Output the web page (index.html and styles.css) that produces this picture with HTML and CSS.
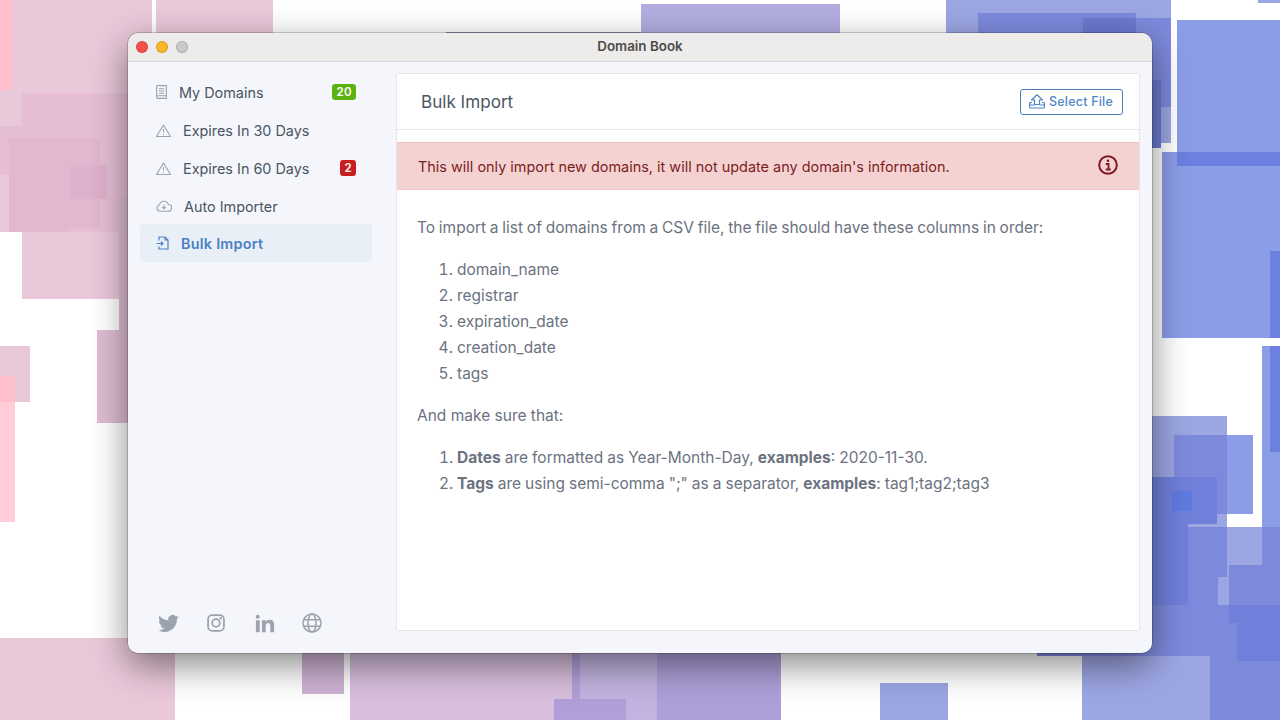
FILE: index.html
```html
<!DOCTYPE html>
<html lang="en">
<head>
    <meta charset="UTF-8">
    <meta name="viewport" content="width=device-width, initial-scale=1.0">
    <title>Domain Book</title>
    <link rel="stylesheet" href="styles.css">
</head>
<body>
    <!-- Desktop wallpaper -->
    <svg class="wallpaper" width="1280" height="720" viewBox="0 0 1280 720">
        <rect class="pink" x="0" y="0" width="152" height="232"/>
        <rect class="pink" x="156" y="0" width="117" height="60"/>
        <rect class="pink" x="22" y="232" width="130" height="67"/>
        <rect class="pink-1" x="22" y="93" width="130" height="139"/>
        <rect class="pink-1" x="0" y="126" width="66" height="49"/>
        <rect class="pink-2" x="9" y="138" width="57" height="94"/>
        <rect class="pink-2" x="66" y="138" width="34" height="90"/>
        <rect class="pink-3" x="70" y="165" width="37" height="34"/>
        <rect class="rose" x="0" y="0" width="12" height="90"/>
        <rect class="pink-4" x="119" y="197" width="40" height="133"/>
        <rect class="pink-4" x="97" y="330" width="60" height="93"/>
        <rect class="pink" x="0" y="346" width="30" height="56"/>
        <rect class="rose-light" x="0" y="402" width="15" height="120"/>
        <rect class="rose" x="0" y="376" width="15" height="26"/>
        <rect class="pink" x="0" y="638" width="175" height="82"/>

        <rect class="mauve" x="302" y="640" width="42" height="54"/>
        <rect class="mauve-light" x="350" y="640" width="222" height="80"/>
        <rect class="lilac-2" x="572" y="640" width="8" height="80"/>
        <rect class="lilac-1" x="580" y="640" width="77" height="80"/>
        <rect class="lilac-2" x="554" y="699" width="72" height="21"/>
        <rect class="lilac-3" x="657" y="640" width="121" height="80"/>
        <rect class="lilac-2" x="778" y="640" width="3" height="80"/>

        <rect class="smoke" x="446" y="32" width="195" height="6"/>
        <rect class="lilac-top" x="641" y="4" width="199" height="40"/>

        <rect class="blue" x="880" y="683" width="68" height="37"/>
        <rect class="blue" x="946" y="0" width="225" height="143"/>
        <rect class="blue-1" x="978" y="13" width="158" height="40"/>
        <rect class="blue-1" x="1083" y="18" width="88" height="89"/>
        <rect class="blue-3" x="1083" y="18" width="53" height="35"/>
        <rect class="blue-3" x="1083" y="80" width="78" height="68"/>
        <rect class="blue" x="1258" y="0" width="22" height="3"/>

        <rect class="azure" x="1177" y="20" width="103" height="146"/>
        <rect class="azure" x="1162" y="152" width="118" height="186"/>
        <rect class="azure-1" x="1177" y="152" width="103" height="14"/>
        <rect class="azure-1" x="1270" y="251" width="10" height="87"/>
        <rect class="azure" x="1262" y="346" width="18" height="181"/>
        <rect class="azure-1" x="1270" y="346" width="10" height="106"/>

        <rect class="blue" x="1130" y="416" width="97" height="161"/>
        <rect class="azure" x="1227" y="435" width="26" height="79"/>
        <rect class="blue-1" x="1174" y="435" width="53" height="79"/>
        <rect class="blue-2" x="1130" y="477" width="87" height="47"/>
        <rect class="azure-2" x="1172" y="491" width="20" height="20"/>
        <rect class="blue" x="1218" y="514" width="9" height="13"/>
        <rect class="blue" x="1227" y="527" width="35" height="78"/>
        <rect class="blue-1" x="1188" y="527" width="39" height="78"/>
        <rect class="blue" x="1218" y="577" width="11" height="28"/>
        <rect class="blue-1" x="1262" y="527" width="18" height="63"/>
        <rect class="blue-2" x="1130" y="524" width="58" height="84"/>
        <rect class="blue-1" x="1229" y="565" width="51" height="40"/>
        <rect class="blue-1" x="1037" y="605" width="173" height="51"/>
        <rect class="blue" x="1082" y="656" width="128" height="64"/>
        <rect class="blue-1" x="1210" y="605" width="70" height="115"/>
        <rect class="blue-2" x="1229" y="605" width="51" height="18"/>
        <rect class="blue-2" x="1237" y="623" width="43" height="38"/>
    </svg>

    <div class="window">
        <div class="titlebar">
            <div class="lights">
                <span class="light light-close"></span>
                <span class="light light-min"></span>
                <span class="light light-max"></span>
            </div>
            <div class="window-title">Domain Book</div>
        </div>

        <div class="window-body">
            <aside class="sidebar">
                <nav class="nav">
                    <a class="nav-item" href="#">
                        <svg class="nav-icon icon-book" viewBox="0 0 11 14" fill="none" stroke="currentColor" stroke-width="1.100">
                            <path d="M.6 12V1.600a1 1 0 0 1 1-1h8.800v12.800H1.800A1.200 1.200 0 0 1 .6 12a1.200 1.200 0 0 1 1.200-1.200h8.600"/>
                            <path d="M2.800 3.700h5.400M2.800 6h5.400M2.800 8.300h5.400"/>
                        </svg>
                        <span>My Domains</span>
                        <span class="badge badge-green">20</span>
                    </a>
                    <a class="nav-item" href="#">
                        <svg class="nav-icon icon-warn" viewBox="0 0 15 13" fill="none" stroke="currentColor" stroke-width="1.100">
                            <path d="M7.500 1 14.500 12.500H.5z" stroke-linejoin="round"/>
                            <path d="M7.500 5v3.500M7.500 10v1"/>
                        </svg>
                        <span>Expires In 30 Days</span>
                    </a>
                    <a class="nav-item" href="#">
                        <svg class="nav-icon icon-warn" viewBox="0 0 15 13" fill="none" stroke="currentColor" stroke-width="1.100">
                            <path d="M7.500 1 14.500 12.500H.5z" stroke-linejoin="round"/>
                            <path d="M7.500 5v3.500M7.500 10v1"/>
                        </svg>
                        <span>Expires In 60 Days</span>
                        <span class="badge badge-red">2</span>
                    </a>
                    <a class="nav-item" href="#">
                        <svg class="nav-icon icon-cloud" viewBox="0 0 16 12" fill="none" stroke="currentColor" stroke-width="1.100">
                            <path d="M4 11.300a3.200 3.200 0 0 1-.6-6.300a4.600 4.600 0 0 1 8.900-.5a3.400 3.400 0 0 1-.3 6.800z" stroke-linejoin="round"/>
                            <path d="M8 4.500v4M6.200 7 8 8.800 9.800 7"/>
                        </svg>
                        <span>Auto Importer</span>
                    </a>
                    <a class="nav-item active" href="#">
                        <svg class="nav-icon icon-import" viewBox="0 0 13 14" fill="none" stroke="currentColor" stroke-width="1.200">
                            <path d="M3 4.500V1h6l3 3v9H3v-2.500"/>
                            <path d="M9 1v3h3M.5 7.500h6.500M5 5.500l2 2-2 2"/>
                        </svg>
                        <span>Bulk Import</span>
                    </a>
                </nav>

                <div class="social">
                    <a href="#" class="social-link">
                        <svg width="21" height="21" viewBox="0 0 24 24" fill="currentColor">
                            <path d="M23.953 4.570a10 10 0 0 1-2.825.775 4.958 4.958 0 0 0 2.163-2.723c-.951.555-2.005.959-3.127 1.184a4.920 4.920 0 0 0-8.384 4.482C7.690 8.095 4.067 6.130 1.640 3.162a4.822 4.822 0 0 0-.666 2.475c0 1.710.870 3.213 2.188 4.096a4.904 4.904 0 0 1-2.228-.616v.060a4.923 4.923 0 0 0 3.946 4.827 4.996 4.996 0 0 1-2.212.085 4.936 4.936 0 0 0 4.604 3.417 9.867 9.867 0 0 1-6.102 2.105c-.390 0-.779-.023-1.170-.067a13.995 13.995 0 0 0 7.557 2.209c9.053 0 13.998-7.496 13.998-13.985 0-.210 0-.420-.015-.630A9.935 9.935 0 0 0 24 4.590z"/>
                        </svg>
                    </a>
                    <a href="#" class="social-link">
                        <svg width="18" height="18" viewBox="0 0 20 20" fill="none" stroke="currentColor" stroke-width="1.900">
                            <rect x="1.200" y="1.200" width="17.600" height="17.600" rx="4.500"/>
                            <circle cx="10" cy="10" r="4.200"/>
                            <circle cx="15.200" cy="4.800" r=".5" fill="currentColor"/>
                        </svg>
                    </a>
                    <a href="#" class="social-link">
                        <svg width="23" height="23" viewBox="0 0 24 24" fill="currentColor">
                            <path d="M6.940 5a2 2 0 1 1-4-.002 2 2 0 0 1 4 .002zM7 8.480H3V21h4V8.480zm6.320 0H9.340V21h3.940v-6.570c0-3.660 4.770-4 4.770 0V21H22v-7.930c0-6.170-7.060-5.940-8.720-2.910l.040-1.680z"/>
                        </svg>
                    </a>
                    <a href="#" class="social-link">
                        <svg width="20" height="20" viewBox="0 0 20 20" fill="none" stroke="currentColor" stroke-width="1.500">
                            <circle cx="10" cy="10" r="9"/>
                            <ellipse cx="10" cy="10" rx="4" ry="9"/>
                            <path d="M1.800 6.700h16.400M1.800 13.300h16.400"/>
                        </svg>
                    </a>
                </div>
            </aside>

            <main class="panel">
                <header class="panel-header">
                    <h1 class="panel-title">Bulk Import</h1>
                    <button class="select-btn">
                        <svg class="select-icon" viewBox="0 0 16 15" fill="none" stroke="currentColor" stroke-width="1.200" stroke-linejoin="round">
                            <path d="M8 .8 13.500 6H10.500V10.500H5.500V6H2.500z"/>
                            <path d="M3 8.500H1.600a1 1 0 0 0-1 1V13a1 1 0 0 0 1 1h12.800a1 1 0 0 0 1-1V9.500a1 1 0 0 0-1-1H13M.6 11h4.900M10.500 11h4.900"/>
                        </svg>
                        Select File
                    </button>
                </header>

                <div class="alert">
                    <span>This will only import new domains, it will not update any domain's information.</span>
                    <svg class="alert-icon" viewBox="0 0 20 20" fill="none" stroke="currentColor">
                        <circle cx="10" cy="10" r="8.800" stroke-width="2"/>
                        <circle cx="10" cy="5.800" r="1.300" fill="currentColor" stroke="none"/>
                        <path d="M7.800 9h2.700v5M7.800 14.500h5" stroke-width="1.800"/>
                    </svg>
                </div>

                <div class="content">
                    <p class="intro">To import a list of domains from a CSV file, the file should have these columns in order:</p>
                    <ol>
                        <li>domain_name</li>
                        <li>registrar</li>
                        <li>expiration_date</li>
                        <li>creation_date</li>
                        <li>tags</li>
                    </ol>
                    <p>And make sure that:</p>
                    <ol class="rules">
                        <li><strong>Dates</strong> are formatted as Year-Month-Day, <strong>examples</strong>: 2020-11-30.</li>
                        <li><strong>Tags</strong> are using semi-comma ";" as a separator, <strong>examples</strong>: tag1;tag2;tag3</li>
                    </ol>
                </div>
            </main>
        </div>
    </div>
</body>
</html>
```

FILE: styles.css
```css
* {
    box-sizing: border-box;
}

html,
body {
    margin: 0;
    padding: 0;
    height: 100%;
    overflow: hidden;
}

body {
    background-color: #fff;
    font-family: Inter, "Noto Sans", sans-serif;
}

a {
    text-decoration: none;
    color: inherit;
}

/* wallpaper */
.wallpaper {
    position: absolute;
    left: 0;
    top: 0;
}

.pink { fill: #e9c8da; }
.pink-1 { fill: #e5bed5; }
.pink-2 { fill: #e2b7d0; }
.pink-3 { fill: #deb1cc; }
.pink-4 { fill: #dfbdd3; }
.rose { fill: #ffbfca; }
.rose-light { fill: #ffccd7; }
.mauve { fill: #ceb3d3; }
.mauve-light { fill: #d8bfdd; }
.lilac-1 { fill: #c2b3e0; }
.lilac-2 { fill: #b29fd8; }
.lilac-3 { fill: #ad9fd8; }
.lilac-top { fill: #b3aee0; }
.smoke { fill: #8f8fb0; }
.blue { fill: #9ca6e3; }
.blue-1 { fill: #7d8adc; }
.blue-2 { fill: #7080da; }
.blue-3 { fill: #6c7ad0; }
.azure { fill: #8c9de8; }
.azure-1 { fill: #6b80df; }
.azure-2 { fill: #5f7be0; }

/* window */
.window {
    position: absolute;
    left: 128px;
    top: 33px;
    width: 1024px;
    height: 620px;
    display: flex;
    flex-direction: column;
    border-radius: 10px;
    overflow: hidden;
    box-shadow: 0 0 0 0.5px rgba(0, 0, 0, 0.35), 0 12px 36px rgba(0, 0, 0, 0.48);
}

.titlebar {
    position: relative;
    height: 29px;
    flex-shrink: 0;
    display: flex;
    align-items: center;
    justify-content: center;
    padding-bottom: 2px;
    background-color: #eeecea;
    border-bottom: 1px solid #d3d2d6;
}

.lights {
    position: absolute;
    left: 8px;
    top: 8px;
    display: flex;
    gap: 8px;
}

.light {
    width: 12px;
    height: 12px;
    border-radius: 50%;
    border: 0.5px solid rgba(0, 0, 0, 0.15);
}

.light-close { background-color: #f6504c; }
.light-min { background-color: #fbb62a; }
.light-max { background-color: #cbcaca; }

.window-title {
    font-size: 13.4px;
    font-weight: 600;
    color: #4c4b4b;
}

.window-body {
    flex: 1;
    display: flex;
    min-height: 0;
    background-color: #f4f6fb;
}

/* sidebar */
.sidebar {
    width: 268px;
    flex-shrink: 0;
    display: flex;
    flex-direction: column;
    justify-content: space-between;
    padding: 11px 24px 18px 12px;
}

.nav {
    display: flex;
    flex-direction: column;
}

.nav-item {
    display: flex;
    align-items: center;
    height: 38px;
    padding: 0 16px;
    border-radius: 4px;
    font-size: 14.4px;
    color: #4b5563;
}

.nav-item.active {
    margin-top: -1px;
    background-color: #e9eff7;
    color: #4a80c4;
    font-weight: 600;
    letter-spacing: 0.25px;
}

.nav-icon {
    flex-shrink: 0;
    margin-right: 12px;
    color: #9ca3af;
}

.active .nav-icon {
    color: #4a80c4;
}

.icon-book { width: 11px; height: 14px; }
.icon-warn { width: 15px; height: 13px; }
.icon-cloud { width: 16px; height: 12px; }
.icon-import { width: 13px; height: 14px; }

.badge {
    margin-left: auto;
    height: 16px;
    padding: 0 4px;
    display: flex;
    align-items: center;
    border-radius: 3px;
    font-size: 11.5px;
    font-weight: 600;
    letter-spacing: 0.4px;
    color: #fff;
}

.badge-green { background-color: #5cb210; }
.badge-red { background-color: #c81e1e; }

.social {
    display: flex;
    padding-left: 4px;
}

.social-link {
    width: 48px;
    height: 24px;
    flex-shrink: 0;
    display: flex;
    align-items: center;
    justify-content: center;
    color: #9ca3af;
}

/* main panel */
.panel {
    flex: 1;
    min-width: 0;
    margin: 11px 12px 22px 0;
    background-color: #fff;
    border: 1px solid #e5e7eb;
    border-radius: 2px;
}

.panel-header {
    height: 56px;
    display: flex;
    align-items: center;
    justify-content: space-between;
    padding: 0 16px 0 24px;
    border-bottom: 1px solid #e5e7eb;
}

.panel-title {
    margin: 0;
    font-size: 17.1px;
    font-weight: 400;
    color: #4b5563;
}

.select-btn {
    height: 26px;
    padding: 0 9px 0 8px;
    display: flex;
    align-items: center;
    gap: 4px;
    background-color: #fff;
    border: 1px solid #4a7fb8;
    border-radius: 3px;
    font-family: inherit;
    font-size: 12.4px;
    font-weight: 500;
    letter-spacing: 0.25px;
    color: #4f86c6;
    cursor: pointer;
}

.select-icon {
    width: 16px;
    height: 15px;
}

.alert {
    height: 48px;
    margin-top: 12px;
    padding: 0 21px;
    display: flex;
    align-items: center;
    justify-content: space-between;
    background-color: #f5d2d2;
    border-top: 1px solid #f1c2c4;
    border-bottom: 1px solid #f1c2c4;
    font-size: 14.45px;
    color: #7b1e23;
}

.alert-icon {
    width: 20px;
    height: 20px;
    margin-right: 0.5px;
    margin-top: -3px;
    color: #7a1a1f;
}

.content {
    padding: 25px 20px;
    font-size: 15.5px;
    line-height: 26px;
    color: #6b7280;
}

.content p {
    margin: 0 0 16px;
}

.content .intro {
    word-spacing: -0.6px;
}

.content ol {
    margin: 0 0 16px;
    padding-left: 40px;
}

.content .rules {
    word-spacing: -0.3px;
}

.content strong {
    font-weight: 700;
}
```
